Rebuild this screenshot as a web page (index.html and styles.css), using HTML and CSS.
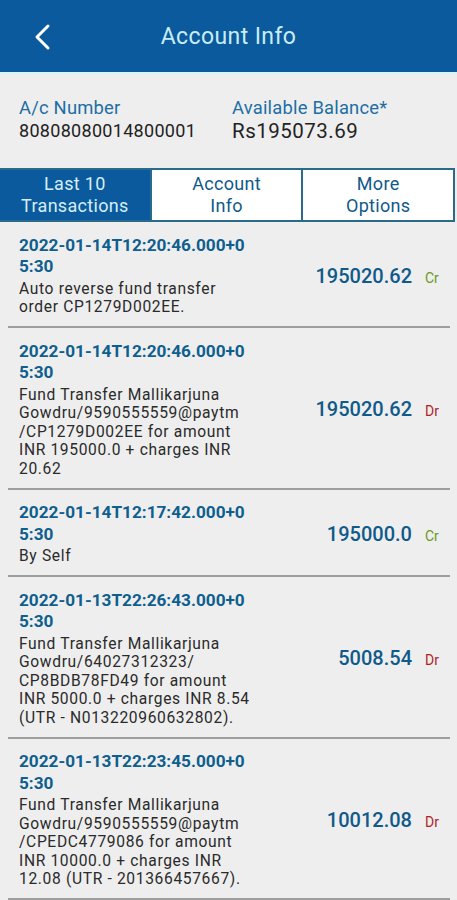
FILE: index.html
```html
<!DOCTYPE html>
<html>
<head>
<meta charset="utf-8">
<link rel="stylesheet" href="styles.css">
</head>
<body>
<header class="topbar">
  <svg class="back" width="20" height="28" viewBox="0 0 20 28"><polyline points="15,3 4,14 15,25" fill="none" stroke="#ffffff" stroke-width="3" stroke-linecap="round" stroke-linejoin="round"/></svg>
  <h1 class="title">Account Info</h1>
</header>
<section class="summary">
  <div class="col">
    <div class="label">A/c Number</div>
    <div class="acno">80808080014800001</div>
  </div>
  <div class="col col-right">
    <div class="label">Available Balance*</div>
    <div class="bal">Rs195073.69</div>
  </div>
</section>
<nav class="tabs">
  <div class="tab active">Last 10<br>Transactions</div>
  <div class="tab">Account<br>Info</div>
  <div class="tab">More<br>Options</div>
</nav>
<main class="list">
  <div class="txn">
    <div class="info">
      <div class="date">2022-01-14T12:20:46.000+0<br>5:30</div>
      <div class="desc">Auto reverse fund transfer<br>order CP1279D002EE.</div>
    </div>
    <div class="amt"><span class="num">195020.62</span><span class="cr">Cr</span></div>
  </div>
  <div class="txn">
    <div class="info">
      <div class="date">2022-01-14T12:20:46.000+0<br>5:30</div>
      <div class="desc">Fund Transfer Mallikarjuna<br>Gowdru/9590555559@paytm<br>/CP1279D002EE for amount<br>INR 195000.0 + charges INR<br>20.62</div>
    </div>
    <div class="amt"><span class="num">195020.62</span><span class="dr">Dr</span></div>
  </div>
  <div class="txn">
    <div class="info">
      <div class="date">2022-01-14T12:17:42.000+0<br>5:30</div>
      <div class="desc">By Self</div>
    </div>
    <div class="amt"><span class="num">195000.0</span><span class="cr">Cr</span></div>
  </div>
  <div class="txn">
    <div class="info">
      <div class="date">2022-01-13T22:26:43.000+0<br>5:30</div>
      <div class="desc">Fund Transfer Mallikarjuna<br>Gowdru/64027312323/<br>CP8BDB78FD49 for amount<br>INR 5000.0 + charges INR 8.54<br>(UTR - N013220960632802).</div>
    </div>
    <div class="amt"><span class="num">5008.54</span><span class="dr">Dr</span></div>
  </div>
  <div class="txn">
    <div class="info">
      <div class="date">2022-01-13T22:23:45.000+0<br>5:30</div>
      <div class="desc">Fund Transfer Mallikarjuna<br>Gowdru/9590555559@paytm<br>/CPEDC4779086 for amount<br>INR 10000.0 + charges INR<br>12.08 (UTR - 201366457667).</div>
    </div>
    <div class="amt"><span class="num">10012.08</span><span class="dr">Dr</span></div>
  </div>
</main>
</body>
</html>
```
FILE: styles.css
```css
* { box-sizing: border-box; }
html, body { margin: 0; padding: 0; }
body {
  width: 457px;
  background: #eeeeee;
  font-family: Roboto, "Noto Sans", sans-serif;
  color: #222;
  overflow: hidden;
}
.topbar {
  height: 74px;
  background: #0b5a9d;
  border-bottom: 2px solid #d8f4f8;
  display: flex;
  align-items: center;
  justify-content: center;
  position: relative;
}
.back {
  position: absolute;
  left: 33px;
  top: 23px;
}
.title {
  margin: 0;
  font-weight: 400;
  font-size: 23px;
  letter-spacing: 0.4px;
  color: #c8ecf5;
}
.summary {
  display: flex;
  padding: 22px 0 0 19px;
  height: 94px;
}
.col { width: 213px; }
.label {
  font-size: 18.4px;
  letter-spacing: 0.2px;
  color: #1d6ea3;
  line-height: 23px;
}
.acno {
  font-size: 18px;
  letter-spacing: 0.3px;
  color: #222;
  line-height: 23px;
}
.bal {
  font-size: 20.5px;
  letter-spacing: 0.5px;
  color: #222;
  line-height: 25px;
}
.tabs {
  display: flex;
  height: 54px;
  border-top: 2px solid #2a6a8a;
  border-bottom: 2px solid #2a6a8a;
  margin-right: 2px;
}
.tab {
  flex: 1;
  background: #ffffff;
  color: #0f5a8a;
  font-size: 18px;
  letter-spacing: 0.3px;
  line-height: 22px;
  text-align: center;
  display: flex;
  align-items: center;
  justify-content: center;
  border-right: 2px solid #2a6a8a;
}
.tab.active {
  background: #0b5a9d;
  color: #d4eef7;
}
.txn {
  display: flex;
  align-items: center;
  padding: 12.5px 0 9.5px 11px;
  margin: 0 7px 0 8px;
  border-bottom: 2px solid #9e9e9e;
}
.info { width: 280px; }
.date {
  font-weight: 700;
  font-size: 17.2px;
  letter-spacing: 0;
  line-height: 21.5px;
  color: #0e5f8e;
}
.desc {
  font-size: 15.6px;
  letter-spacing: 0.65px;
  line-height: 18.5px;
  color: #2a2a2a;
  margin-top: 2px;
}
.amt {
  flex: 1;
  display: flex;
  align-items: baseline;
  justify-content: flex-end;
  padding-right: 9px;
}
.num {
  font-size: 20px;
  font-weight: 500;
  letter-spacing: 0;
  color: #0f5a8a;
}
.cr, .dr {
  font-size: 14px;
  margin-left: 13px;
  width: 16px;
}
.cr { color: #6a9a1a; }
.dr { color: #b01f28; }
```
